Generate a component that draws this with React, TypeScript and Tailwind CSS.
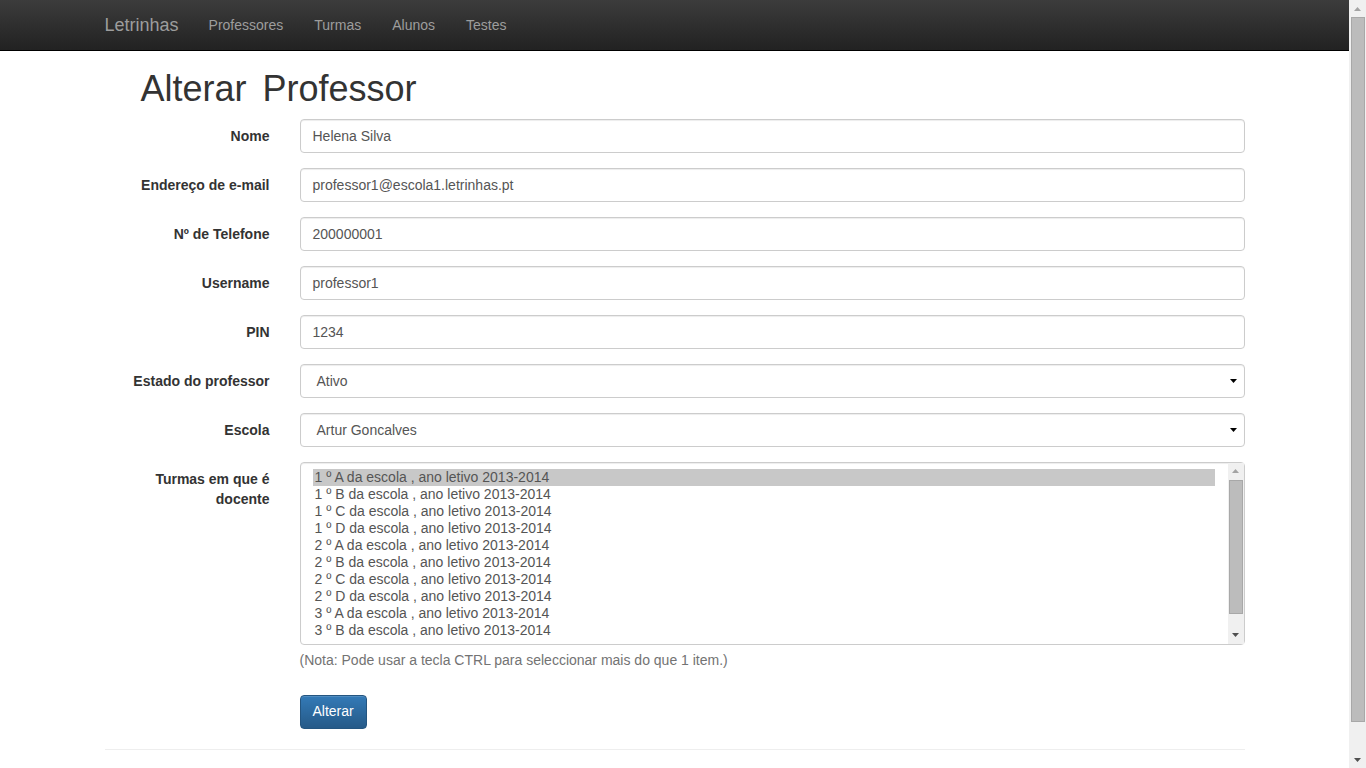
import React from "react";

const fields = [
  { label: "Nome", value: "Helena Silva" },
  { label: "Endereço de e-mail", value: "professor1@escola1.letrinhas.pt" },
  { label: "Nº de Telefone", value: "200000001" },
  { label: "Username", value: "professor1" },
  { label: "PIN", value: "1234" },
];

const selects = [
  { label: "Estado do professor", value: "Ativo" },
  { label: "Escola", value: "Artur Goncalves" },
];

const turmas = [
  "1 º A",
  "1 º B",
  "1 º C",
  "1 º D",
  "2 º A",
  "2 º B",
  "2 º C",
  "2 º D",
  "3 º A",
  "3 º B",
];

function Arrow({ up, color = "#000" }: { up?: boolean; color?: string }) {
  return (
    <svg width="7" height="4" viewBox="0 0 7 4" className={up ? "rotate-180" : ""}>
      <path d="M0 0h7L3.5 4z" fill={color} />
    </svg>
  );
}

function Row({ label, children, top = "pt-[7px]" }: { label: string; children: React.ReactNode; top?: string }) {
  return (
    <div className="flex mb-[15px]">
      <div className={`w-[195px] px-[15px] text-right font-bold text-[14px] leading-[20px] text-[#333] ${top}`}>{label}</div>
      <div className="flex-1 px-[15px]">{children}</div>
    </div>
  );
}

function Input({ value }: { value: string }) {
  return (
    <div className="h-[34px] border border-[#ccc] rounded-[4px] px-[12px] pt-[1px] flex items-center text-[14px] text-[#555] shadow-[inset_0_1px_1px_rgba(0,0,0,0.075)]">
      {value}
    </div>
  );
}

function Select({ value }: { value: string }) {
  return (
    <div className="h-[34px] border border-[#ccc] rounded-[4px] pl-[16px] pr-[7px] pt-[1px] flex items-center justify-between text-[14px] text-[#555] shadow-[inset_0_1px_1px_rgba(0,0,0,0.075)]">
      <span>{value}</span>
      <Arrow />
    </div>
  );
}

export default function App() {
  return (
    <div className="flex h-[768px] overflow-hidden bg-white font-['Liberation_Sans',Arial,sans-serif]">
      <div className="flex-1 min-w-0">
        <nav className="h-[51px] border-b border-black bg-gradient-to-b from-[#3c3c3c] to-[#222]">
          <div className="w-[1170px] mx-auto px-[15px] flex h-[50px] items-center">
            <span className="-ml-[15px] px-[15px] text-[18px] text-[#9d9d9d]">Letrinhas</span>
            {["Professores", "Turmas", "Alunos", "Testes"].map((n) => (
              <span key={n} className="px-[15px] text-[14px] text-[#9d9d9d] mr-[1px]">
                {n}
              </span>
            ))}
          </div>
        </nav>

        <div className="w-[1170px] mx-auto px-[15px]">
          <h1 className="mt-[18px] mb-[10px] ml-[36px] text-[36px] leading-[39.6px] text-[#333]">
            Alterar <span className="ml-[6px]">Professor</span>
          </h1>

          <div className="-mx-[15px]">
            {fields.map((f) => (
              <Row key={f.label} label={f.label}>
                <Input value={f.value} />
              </Row>
            ))}
            {selects.map((s) => (
              <Row key={s.label} label={s.label}>
                <Select value={s.value} />
              </Row>
            ))}

            <Row label="Turmas em que é docente" top="pt-[7px] pl-[30px]">
              <div className="flex h-[183px] border border-[#ccc] rounded-[4px] shadow-[inset_0_1px_1px_rgba(0,0,0,0.075)]">
                <div className="flex-1 pl-[12px] pr-[13px] py-[6px]">
                  {turmas.map((t, i) => (
                    <div
                      key={t}
                      className={`h-[17px] px-[2px] text-[14px] leading-[17px] text-[#555] ${i === 0 ? "bg-[#c8c8c8]" : ""}`}
                    >
                      {t} da escola , ano letivo 2013-2014
                    </div>
                  ))}
                </div>
                <div className="w-[16px] bg-[#f0f0f0] flex flex-col items-center">
                  <div className="h-[17px] flex items-center justify-center">
                    <Arrow up color="#a3a3a3" />
                  </div>
                  <div className="w-[14px] h-[134px] bg-[#bcbcbc] border border-[#a8a8a8]" />
                  <div className="flex-1" />
                  <div className="h-[17px] flex items-center justify-center">
                    <Arrow color="#505050" />
                  </div>
                </div>
              </div>
              <p className="mt-[5px] mb-[10px] text-[14px] leading-[20px] text-[#737373]">
                (Nota: Pode usar a tecla CTRL para seleccionar mais do que 1 item.)
              </p>
            </Row>

            <div className="flex">
              <div className="w-[195px]" />
              <div className="px-[15px]">
                <button className="h-[34px] px-[12px] rounded-[4px] border border-[#245580] bg-gradient-to-b from-[#337ab7] to-[#265a88] text-white text-[14px] shadow-[inset_0_1px_0_rgba(255,255,255,0.15)]">
                  Alterar
                </button>
              </div>
            </div>
          </div>

          <hr className="mt-[20px] border-t border-[#eee]" />
        </div>
      </div>

      <div className="w-[17px] bg-[#f0f0f0] flex flex-col items-center">
        <div className="h-[17px] flex items-center justify-center">
          <Arrow up color="#a3a3a3" />
        </div>
        <div className="w-[14px] h-[705px] bg-[#bcbcbc] border border-[#a8a8a8]" />
        <div className="flex-1" />
        <div className="h-[17px] flex items-center justify-center">
          <Arrow color="#505050" />
        </div>
      </div>
    </div>
  );
}
